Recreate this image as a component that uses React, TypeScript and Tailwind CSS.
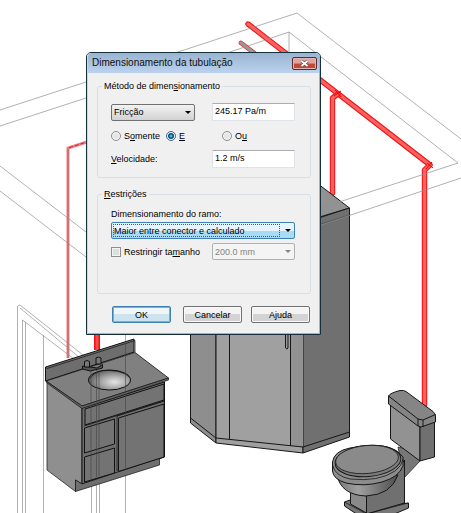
import type { ReactNode } from "react";

const GUIDES = [
  "M0 110L86 82L178 52L297 13L358 60L461 139",
  "M0 126L86 98L230 52L289 32L325 60L458 163L321 208",
  "M289 32V60",
  "M0 166L86 232",
  "M0 191L86 257",
  "M461 178L321 225",
];

const DOOR_FRAME = [
  "M17.5 513V306L20 305L93 363",
  "M20 308L86 363",
  "M22.5 513V320L82 365",
  "M25.5 513V322",
  "M43.5 513V335",
  "M91.5 480V513",
  "M96.5 480V513",
  "M99.5 480V513",
  "M125.5 335V513",
];

function Pipe({ d }: { d: string }) {
  return (
    <g fill="none" strokeLinejoin="round" strokeLinecap="round">
      <path d={d} stroke="#ee1111" strokeWidth="5.4" />
      <path d={d} stroke="#ff6060" strokeWidth="3.4" />
    </g>
  );
}

function Vanity() {
  return (
    <g stroke="#111" strokeLinejoin="round" strokeWidth="1">
      <path d="M47 381L82 408V484L75.500 480V491.500L47 470Z" fill="#8f8f8f" strokeWidth=".7" />
      <path d="M82 408L164.500 382V457L82 484Z" fill="#6f6f6f" />
      <path d="M75.500 480L82 484L159.500 458V465L75.500 491.500Z" fill="#6f6f6f" strokeWidth=".7" />
      <path d="M45.500 367L134 339V352L45.500 381Z" fill="#6e6e6e" />
      <path d="M45.500 367L47 368.500L135 340.500V352.500" fill="none" strokeWidth=".7" />
      <path d="M46 381L135 352.500L168.500 378L82 406Z" fill="#808080" strokeWidth=".8" />
      <path d="M46 381L82 406L168.500 378V380L82 408.500L47 383Z" fill="#666" strokeWidth=".7" />
      <path d="M85 409L164 384V400L85 425Z" fill="#737373" />
      <path d="M84.500 428L114.500 419V444L84.500 453Z" fill="#737373" />
      <path d="M84.500 457L114.500 448V473L84.500 482Z" fill="#737373" />
      <path d="M118.500 418L164 404V457L118.500 471.500Z" fill="#737373" />
      <path d="M117 471V416L164 401M84 426L164 401" fill="none" strokeWidth=".7" />
      <ellipse cx="109.500" cy="380" rx="21" ry="10" fill="url(#sink)" />
      <path d="M90 378Q97 369 110 370.500Q124 371 129 377" fill="none" strokeWidth=".7" />
      <path d="M82.500 366L97 368L102.500 364.500V368L90 371L82.500 369Z" fill="#555" />
      <path d="M84.500 361.500Q87 359.500 89.500 361.500V367H84.500ZM96 358Q98.500 356 101 358V364H96Z" fill="#777" />
      <path d="M91 370V479M96.500 370V477M99 368V476M125.500 343V468" stroke="#444" strokeWidth=".6" />
    </g>
  );
}

function Cabinet() {
  return (
    <g stroke="#161616" strokeLinejoin="round" strokeWidth="1">
      <path d="M300 170L349.500 208L303 222Z" fill="#929292" />
      <path d="M190.500 330H216V443L190.500 423Z" fill="#8e8e8e" />
      <path d="M216 330H303V453L216 443Z" fill="#a0a0a0" />
      <path d="M303 223L349.500 208V437L303 453Z" fill="#707070" />
      <path d="M290.500 330H303V447L290.500 446Z" fill="#929292" stroke="none" />
      <path d="M190.500 418L216 438L303 447L349.500 432M229.500 330V439M290.500 330V446" fill="none" />
      <path d="M285.500 330H288V348Q287 350 285.500 348Z" fill="#999" />
      <path d="M303 230L349.500 215" stroke="#3d3d3d" strokeWidth=".7" />
    </g>
  );
}

function Toilet() {
  return (
    <g stroke="#161616" strokeLinejoin="round" strokeWidth="1">
      <path d="M398 447L407 449L420 461L404 478Z" fill="#777" strokeWidth=".7" />
      <path d="M344.500 502L350 500L366.500 508L408.500 503V508L392 515H358L344.500 506Z" fill="#777" />
      <path d="M350.500 492L366.500 496V513L350.500 504Z" fill="#8a8a8a" />
      <path d="M366.500 496L390 480L404.500 460V503L366.500 514Z" fill="#707070" />
      <path d="M344.500 502L366.500 514L408 503" fill="none" strokeWidth=".7" />
      <path d="M337 475Q341 495 366 496Q391 495 398 475Z" fill="url(#bowl)" />
      <path d="M332.500 462Q334 451 350 448Q390 440 403 457V466Q399 477 382 482Q364 487 346 483Q333 479 332.500 471Z" fill="#8c8c8c" />
      <path d="M332.500 465Q335 476 350 479Q379 482 395 471Q402 466 403 459" fill="none" strokeWidth=".8" />
      <ellipse cx="368" cy="461" rx="33" ry="15.500" transform="rotate(-5 368 461)" fill="#7c7c7c" />
      <ellipse cx="367" cy="459.500" rx="31.500" ry="14" transform="rotate(-5 367 459.500)" fill="#8a8a8a" strokeWidth=".8" />
      <path d="M390.500 402L420 425V461L390.500 439Z" fill="#929292" />
      <path d="M420 426L434.500 421V457L420 461Z" fill="#707070" />
      <path d="M388.500 396Q390 393 400 390.500Q404 390 406 391.500L433 411.500Q435.500 414 435.500 416V422L421 427L418 426L388.500 404Z" fill="#858585" />
      <path d="M388.500 396L418 419V426M418 419L423 420V427M423 420L435.500 414.500" fill="none" />
    </g>
  );
}

function PlumbingView() {
  return (
    <svg viewBox="0 0 461 513" className="block h-auto w-full" aria-hidden="true">
      <defs>
        <radialGradient id="sink" cx=".62" cy=".6" r=".6">
          <stop offset="0" stopColor="#e6e6e6" />
          <stop offset=".55" stopColor="#a5a5a5" />
          <stop offset="1" stopColor="#686868" />
        </radialGradient>
        <linearGradient id="bowl">
          <stop offset="0" stopColor="#777" />
          <stop offset=".35" stopColor="#a0a0a0" />
          <stop offset="1" stopColor="#4d4d4d" />
        </linearGradient>
      </defs>

      {/* supply pipes */}
      <Pipe d="M248 24L430 165L424.500 170V405" />
      <Pipe d="M338 94L332.500 98V193" />
      <path d="M335 90L341 97M341 91L334 96M427 163L433 168M432 162L426 169" stroke="#e00" />
      <path d="M97 330V350" stroke="#e11" strokeWidth="6" />
      <path d="M97 330V350" stroke="#ff4a4a" strokeWidth="3" />
      <path d="M241 43L262 59" stroke="#e22" strokeWidth="4.600" strokeLinecap="round" />
      <path d="M241 43L262 59" stroke="#999" strokeWidth="3.200" strokeLinecap="round" />
      <path d="M90 141L68 148V358" fill="none" stroke="#f08080" strokeWidth="3" />
      <path d="M68 149V358" stroke="#a66" strokeWidth="1" />
      <path d="M90 141L68 148" stroke="#c22" strokeDasharray="4 2" />

      <Cabinet />
      <g fill="none" stroke="#8f8f8f" strokeWidth=".7">
        {GUIDES.map((d) => (
          <path key={d} d={d} />
        ))}
        {DOOR_FRAME.map((d) => (
          <path key={d} d={d} />
        ))}
      </g>
      <Vanity />
      <Toilet />
    </svg>
  );
}

function Arrow() {
  return (
    <svg viewBox="0 0 6 3" className="pointer-events-none absolute top-[7px] right-[4px] h-[3px] w-[6px] fill-current">
      <path d="M0 0H6L3 3Z" />
    </svg>
  );
}

function Group({ title, children }: { title: ReactNode; children: ReactNode }) {
  return (
    <fieldset className="rounded-[3px] border border-[#d5dfe8]">
      <legend className="ml-1 px-[2px] leading-3">{title}</legend>
      {children}
    </fieldset>
  );
}

const radioClass =
  "size-[10px] shrink-0 appearance-none rounded-full border border-[#8e8f8f] bg-[#e6e6e6] shadow-[inset_0_0_0_1px_#f6f6f6] checked:border-[#4b6a80] checked:bg-[radial-gradient(circle,#39b4e4_0_1px,#0b4f7c_2px_3px,#e8f1f5_4px)]";
const inputClass =
  "h-[18px] w-[83px] border border-[#dfe4ea] border-t-[#abadb3] bg-white px-[2px] pb-[2px]";
const buttonClass =
  "h-[17px] w-[59px] rounded-[2px] border border-[#707070] bg-linear-to-b from-[#f3f3f3] from-50% to-[#d3d3d3] to-50% text-center leading-3 shadow-[inset_0_0_0_1px_#fafafa]";

function SizingDialog() {
  return (
    <div
      role="dialog"
      aria-labelledby="dialog-title"
      className="absolute top-[52px] left-[86px] w-[235px] rounded-t-[5px] border border-[#14303c] bg-[#f0f0f0] font-['Liberation_Sans',Arial,sans-serif] text-[9px] leading-3 text-black"
    >
      <div className="rounded-t-[4px] border border-t-0 border-[#6cc8e4] border-l-[#c5d9ec]">
        <header className="flex h-[20px] items-center justify-between rounded-t-[4px] bg-linear-to-b from-[#99b4d1] to-[#bcd2ee] pr-[2px] pl-1">
          <h1 id="dialog-title" className="text-[10px] text-[#101010]">
            Dimensionamento da tubulação
          </h1>
          <button
            type="button"
            aria-label="Fechar"
            className="flex h-[13px] w-[25px] items-center justify-center rounded-[2px] border border-[#5b2a30] bg-linear-to-b from-[#dfa49d] from-45% to-[#c04a35] to-55% shadow-[inset_0_0_0_1px_#e6b5ae]"
          >
            <svg viewBox="0 0 9 7" className="h-[7px] w-[9px]">
              <path d="M1.500 1L7.500 6M7.500 1L1.500 6" stroke="#4c4c5c" strokeWidth="3" />
              <path d="M1.500 1L7.500 6M7.500 1L1.500 6" stroke="#fff" strokeWidth="1.800" />
            </svg>
          </button>
        </header>

        <div className="flex flex-col gap-[10px] pt-[7px] pr-2 pb-[10px] pl-[9px]">
          <Group
            title={
              <>
                Método de dimen<u>s</u>ionamento
              </>
            }
          >
            <div className="flex flex-col gap-[9px] pt-[11px] pr-[15px] pb-[9px] pl-[13px]">
              <div className="flex items-center justify-between">
                <div className="relative w-[84px]">
                  <select
                    aria-label="Método"
                    className="block h-[17px] w-full appearance-none rounded-[2px] border border-[#707070] bg-linear-to-b from-[#f2f2f2] to-[#d2d2d2] pl-[2px] leading-3"
                  >
                    <option>Fricção</option>
                  </select>
                  <Arrow />
                </div>
                <input aria-label="Fricção" defaultValue="245.17 Pa/m" className={inputClass} />
              </div>

              <div className="grid h-[11px] grid-cols-[55px_56px_1fr] items-center">
                <label className="flex items-center gap-[3px]">
                  <input type="radio" name="rule" className={radioClass} />
                  <span>
                    S<u>o</u>mente
                  </span>
                </label>
                <label className="flex items-center gap-[3px]">
                  <input type="radio" name="rule" defaultChecked className={radioClass} />
                  <u>E</u>
                </label>
                <label className="flex items-center gap-[3px]">
                  <input type="radio" name="rule" className={radioClass} />
                  <span>
                    O<u>u</u>
                  </span>
                </label>
              </div>

              <div className="flex items-center justify-between">
                <label htmlFor="speed">
                  <u>V</u>elocidade:
                </label>
                <input id="speed" defaultValue="1.2 m/s" className={inputClass} />
              </div>
            </div>
          </Group>

          <Group
            title={
              <>
                <u>R</u>estrições
              </>
            }
          >
            <div className="flex flex-col pt-2 pr-[15px] pb-[33px] pl-[13px]">
              <label htmlFor="branch">Dimensionamento do ramo:</label>
              <div className="relative mt-[2px]">
                <select
                  id="branch"
                  className="block h-[17px] w-full appearance-none rounded-[2px] border border-[#3c7fb1] bg-linear-to-b from-[#e6f5fd] from-50% to-[#a9dbf6] to-50% pl-[2px] leading-3"
                >
                  <option>Maior entre conector e calculado</option>
                </select>
                <span className="pointer-events-none absolute inset-y-[2px] right-[15px] left-[2px] border border-dotted border-[#555]" />
                <Arrow />
              </div>
              <div className="mt-1 flex items-center justify-between">
                <label className="flex items-center gap-[3px]">
                  <input
                    type="checkbox"
                    className="size-[10px] appearance-none border border-[#8e8f8f] bg-[#dcdfe2] shadow-[inset_0_0_0_1px_#f4f4f4]"
                  />
                  <span>
                    Restringir ta<u>m</u>anho
                  </span>
                </label>
                <div className="relative w-[83px] text-[#838383]">
                  <select
                    aria-label="Tamanho"
                    disabled
                    className="block h-[17px] w-full appearance-none rounded-[2px] border border-[#adb2b5] bg-[#f4f4f4] pl-[2px] leading-3 opacity-100"
                  >
                    <option>200.0 mm</option>
                  </select>
                  <Arrow />
                </div>
              </div>
            </div>
          </Group>

          <div className="mt-[2px] flex justify-end pr-px">
            <button
              type="button"
              className="h-[17px] w-[59px] rounded-[2px] border border-[#3c7fb1] bg-linear-to-b from-[#eef6fa] from-50% to-[#cde3ee] to-50% leading-3 shadow-[inset_0_0_0_1px_#48c4ee]"
            >
              OK
            </button>
            <button type="button" className={`ml-3 ${buttonClass}`}>
              Cancelar
            </button>
            <button type="button" className={`ml-[9px] ${buttonClass}`}>
              Ajuda
            </button>
          </div>
        </div>
      </div>
    </div>
  );
}

export default function App() {
  return (
    <main className="relative overflow-hidden bg-white">
      <PlumbingView />
      <SizingDialog />
    </main>
  );
}
